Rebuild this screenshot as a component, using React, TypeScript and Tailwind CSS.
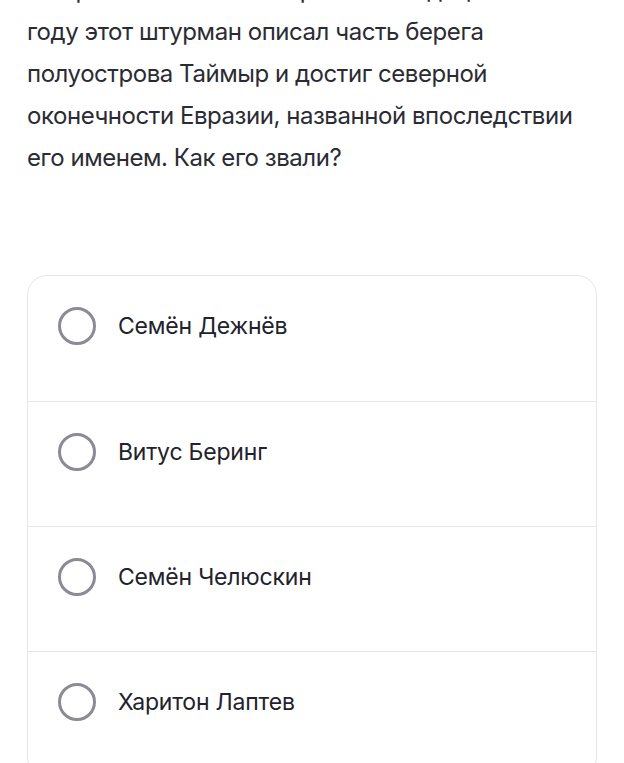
import React from 'react';

const options = ['Семён Дежнёв', 'Витус Беринг', 'Семён Челюскин', 'Харитон Лаптев'];

export default function App() {
  return (
    <div className="w-[624px] h-[763px] overflow-hidden bg-white font-['Inter',sans-serif]">
      <div className="px-[27px] -mt-[31px]">
        <p className="text-[24px] leading-[42px] tracking-[-0.45px] text-[#2b2b33]">
          Во время Великой Северной экспедиции в 1742 году этот штурман описал часть берега полуострова Таймыр и
          достиг северной оконечности Евразии, названной впоследствии его именем. Как его звали?
        </p>
      </div>

      <div className="mx-[27px] mt-[96px] rounded-[20px] border border-[#e6e6ea] overflow-hidden">
        {options.map((name, i) => (
          <div
            key={name}
            className={`h-[125px] flex items-start gap-[22px] pl-[30px] pt-[31px] ${i > 0 ? 'border-t border-[#e6e6ea]' : ''}`}
          >
            <div className="w-[38px] h-[38px] rounded-full border-[3.5px] border-[#8b8b96] shrink-0" />
            <span className="text-[23px] leading-[38px] tracking-[-0.2px] text-[#22222c]">{name}</span>
          </div>
        ))}
      </div>
    </div>
  );
}
